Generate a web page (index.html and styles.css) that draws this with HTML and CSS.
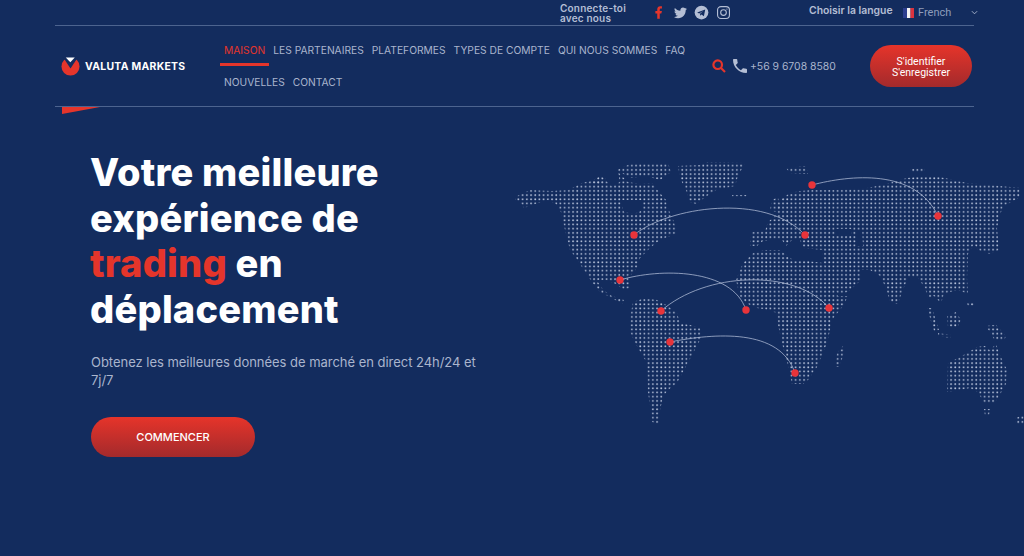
FILE: index.html
```html
<!DOCTYPE html>
<html lang="fr">
<head>
  <meta charset="UTF-8" />
  <meta name="viewport" content="width=device-width, initial-scale=1.0" />
  <title>Valuta Markets</title>
  <link rel="stylesheet" href="styles.css">
</head>
<body>
  <header class="container">
    <div class="topbar">
      <div class="connect">Connecte-toi<br>avec nous</div>
      <div class="social">
        <svg class="social-fb" viewBox="0 0 24 24" width="15" height="15"><path d="M14 13.5h2.5l1-4H14v-2c0-1.03 0-2 2-2h1.5V2.14c-.326-.043-1.557-.14-2.857-.14C11.928 2 10 3.657 10 6.7v2.8H7v4h3V22h4v-8.5z"/></svg>
        <svg viewBox="0 0 24 24" width="15" height="15"><path d="M22.46 6c-.77.35-1.6.58-2.46.69.88-.53 1.56-1.37 1.88-2.38-.83.5-1.75.85-2.72 1.05C18.37 4.5 17.26 4 16 4c-2.35 0-4.27 1.92-4.27 4.29 0 .34.04.67.11.98C8.28 9.09 5.11 7.38 3 4.79c-.37.63-.58 1.37-.58 2.15 0 1.49.75 2.81 1.91 3.56-.71 0-1.37-.2-1.95-.5v.03c0 2.08 1.48 3.82 3.44 4.21a4.22 4.22 0 0 1-1.93.07 4.28 4.28 0 0 0 4 2.98 8.521 8.521 0 0 1-5.33 1.84c-.34 0-.68-.02-1.02-.06C3.44 20.29 5.7 21 8.12 21 16 21 20.33 14.46 20.33 8.79c0-.19 0-.37-.01-.56.84-.6 1.56-1.36 2.14-2.23z"/></svg>
        <svg viewBox="0 0 24 24" width="15" height="15"><circle cx="12" cy="12" r="11"/><path class="cut" d="M5 12l13-5-2.200 11-3.800-2.800-2 1.900-.4-3.100 5.200-4.500-6.500 4z"/></svg>
        <svg class="social-ig" viewBox="0 0 24 24" width="15" height="15"><rect x="2.500" y="2.500" width="19" height="19" rx="5.500"/><circle cx="12" cy="12" r="4.500"/><circle class="dot" cx="17.500" cy="6.500" r="1"/></svg>
      </div>
      <div class="lang-label">Choisir la langue</div>
      <div class="lang">
        <svg viewBox="0 0 11 10" width="11" height="10"><rect width="4" height="10" fill="#2d3f8f"/><rect x="4" width="3.500" height="10" fill="#f4f4f4"/><rect x="7.500" width="3.500" height="10" fill="#d9333f"/></svg>
        <span>French</span>
        <svg class="chevron" viewBox="0 0 8 5" width="7" height="5"><path d="M1 1l3 3 3-3"/></svg>
      </div>
    </div>

    <div class="navbar">
      <div class="logo">
        <svg viewBox="0 0 20 20" width="19" height="19">
          <circle cx="10" cy="10" r="9.500" fill="#e5352b"/>
          <path d="M2 0h16l-8 12z" fill="#132c5e"/>
          <path d="M5 0.500h9.500l-4.700 5z" fill="#fff"/>
        </svg>
        <span>VALUTA MARKETS</span>
      </div>
      <nav class="menu">
        <a class="active">MAISON</a>
        <a>LES PARTENAIRES</a>
        <a>PLATEFORMES</a>
        <a>TYPES DE COMPTE</a>
        <a>QUI NOUS SOMMES</a>
        <a>FAQ</a>
        <a>NOUVELLES</a>
        <a>CONTACT</a>
      </nav>
      <svg class="search" viewBox="0 0 14 14" width="14" height="14"><circle cx="5.700" cy="5.700" r="4.300"/><path d="M9 9l4 4"/></svg>
      <svg class="phone" viewBox="3 3 18 18" width="14" height="14"><path d="M6.620 10.790c1.440 2.830 3.760 5.140 6.590 6.590l2.200-2.200c.27-.27.67-.36 1.020-.24 1.120.37 2.330.57 3.570.57.55 0 1 .45 1 1V20c0 .55-.45 1-1 1-9.390 0-17-7.610-17-17 0-.55.45-1 1-1h3.500c.55 0 1 .45 1 1 0 1.250.2 2.450.57 3.570.11.35.03.74-.25 1.020l-2.200 2.200z"/></svg>
      <span class="phone-num">+56 9 6708 8580</span>
      <a class="btn btn-login">S'identifier<br>S'enregistrer</a>
      <span class="wedge"></span>
    </div>
  </header>

  <main class="hero">
    <div class="hero-text">
      <h1>Votre meilleure expérience de <span class="red">trading</span> en déplacement</h1>
      <p>Obtenez les meilleures données de marché en direct 24h/24 et 7j/7</p>
      <a class="btn btn-start">COMMENCER</a>
    </div>

    <svg class="map" viewBox="510 150 514 280" width="514" height="280">
      <defs>
        <pattern id="dots" x="0" y="0" width="4.200" height="4.200" patternUnits="userSpaceOnUse">
          <rect x="1" y="1" width="1.700" height="1.700" rx="0.600" fill="#b4bfd8"/>
        </pattern>
      </defs>
      <g fill="url(#dots)" fill-rule="evenodd">
        <!-- north america -->
        <path d="M515 197L530 190 552 191 568 190 582 183 590 181 604 179 612 186 620 182 618 172 628 182 640 184 652 183 660 193 666 200 668 208 674 222 677 233 670 236 660 240 650 248 640 258 637 268 632 274 628 276 630 288 624 290 616 284 606 280 597 280 600 286 606 292 612 296 624 300 622 304 612 298 600 292 592 282 584 270 576 258 570 250 567 238 563 222 561 212 556 204 548 200 535 204 524 208 520 202 515 202ZM620 200L643 200 643 210 634 214 624 212Z"/>
        <path d="M617 170L630 164 668 163 671 172 660 180 646 176 630 178ZM590 182L600 176 606 179 600 184Z"/>
        <!-- greenland, iceland -->
        <path d="M678 166L700 165 708 162 745 163 738 176 735 186 716 190 704 198 696 204 690 202 686 190 680 178ZM732 195H748V198H732Z"/>
        <!-- south america -->
        <path d="M633 302L645 298 657 300 668 306 677 313 680 323 690 325 700 328 701 338 692 355 684 370 677 383 668 390 663 397 660 410 660 424 652 422 650 405 648 393 647 363 638 348 630 332 630 318Z"/>
        <!-- africa -->
        <path d="M753 253L765 250 780 250 793 260 808 261 823 263 826 272 832 284 838 296 848 296 843 306 832 320 830 330 827 343 822 355 817 367 808 380 803 384 792 384 788 365 783 347 778 325 777 313 768 310 757 308 748 304 740 297 736 280 743 263Z"/>
        <path d="M835 367L837 353 843 346 845 350 841 362 839 367Z"/>
        <!-- eurasia -->
        <path d="M750 241L752 232 765 231 768 222 775 216 780 200 790 193 800 191 812 190 834 190 850 189 867 188 886 184 907 178 925 176 940 177 967 183 990 185 1020 188 1020 197 1004 206 1000 214 997 228 999 250 990 254 978 250 974 244 968 254 967 278 968 294 958 290 950 292 944 294 941 303 934 296 928 298 925 288 918 278 908 278 902 292 898 304 890 302 886 288 880 276 870 270 860 270 861 280 848 292 838 294 832 286 826 272 823 262 822 250 803 248 800 240 792 240 786 246 782 240 770 240 763 241 757 246 750 246ZM835 229L851 229 851 236 835 236ZM856 230L862 230 863 246 857 246Z"/>
        <path d="M772 200L778 197 780 208 776 212 770 210ZM786 168L806 166 808 174 790 173ZM910 169L925 168 925 172 912 172Z"/>
        <!-- islands -->
        <path d="M927 308L932 308 939 330 934 331ZM947 316L956 312 961 320 957 328 948 327ZM938 333L951 335 950 338 938 336ZM967 303L975 303 974 306 968 306ZM986 326L996 325 1006 336 1004 341 994 339Z"/>
        <!-- australia -->
        <path d="M948 363L958 358 967 353 977 347 985 346 990 350 996 344 1000 355 1007 370 1006 384 998 398 994 403 984 403 978 392 970 388 960 390 947 392Z"/>
        <path d="M984 409L990 409 989 416 985 416ZM1015 418L1024 415 1024 424 1016 424Z"/>
      </g>
      <g class="arcs">
        <path d="M634 235C668 207 765 192 805 235"/>
        <path d="M812 185C850 175 915 168 938 216"/>
        <path d="M620 280C660 268 732 268 746 310"/>
        <path d="M661 311C705 272 795 268 829 308"/>
        <path d="M670 342C715 333 780 328 795 373"/>
      </g>
      <g fill="#e8343a">
        <circle cx="634" cy="235" r="3.700"/>
        <circle cx="620" cy="280" r="3.700"/>
        <circle cx="661" cy="311" r="3.700"/>
        <circle cx="746" cy="310" r="3.700"/>
        <circle cx="829" cy="308" r="3.700"/>
        <circle cx="670" cy="342" r="3.700"/>
        <circle cx="795" cy="373" r="3.700"/>
        <circle cx="805" cy="235" r="3.700"/>
        <circle cx="812" cy="185" r="3.700"/>
        <circle cx="938" cy="216" r="3.700"/>
      </g>
    </svg>
  </main>
</body>
</html>
```

FILE: styles.css
```css
* {
  margin: 0;
  padding: 0;
  box-sizing: border-box;
}

body {
  font-family: 'Inter', 'Liberation Sans', sans-serif;
  background: #132c5e;
  color: #fff;
  height: 556px;
  overflow: hidden;
}

.container {
  margin-left: 55px;
  width: 919px;
}

/* top strip */
.topbar {
  display: flex;
  align-items: center;
  height: 26px;
  padding-left: 505px;
  border-bottom: 1px solid #4d648f;
  color: #b4bed4;
}

.topbar > * {
  flex: none;
}

.connect {
  width: 91px;
  font-size: 10px;
  font-weight: 600;
  line-height: 10px;
  letter-spacing: 0.2px;
}

.social {
  display: flex;
  gap: 6.600px;
  width: 158px;
}

.social svg {
  fill: #b4bed4;
}

.social .social-fb {
  fill: #e5352b;
}

.social .cut {
  fill: #132c5e;
}

.social .social-ig {
  fill: none;
  stroke: #b4bed4;
  stroke-width: 1.800;
}

.social .social-ig .dot {
  fill: #b4bed4;
  stroke: none;
}

.lang-label {
  width: 94px;
  font-size: 10.400px;
  font-weight: 600;
  margin-top: -4px;
}

.lang {
  display: flex;
  align-items: center;
  font-family: 'Roboto', sans-serif;
  font-size: 11px;
  color: #8e9cbb;
}

.lang span {
  margin-left: 4px;
  width: 53px;
}

.chevron {
  fill: none;
  stroke: #b4bed4;
  stroke-width: 1;
}

/* main nav */
.navbar {
  position: relative;
  display: flex;
  align-items: center;
  height: 81px;
  border-bottom: 1px solid #4d648f;
}

.logo {
  display: flex;
  align-items: center;
  gap: 5px;
  width: 165px;
  padding-left: 6px;
  font-size: 10.400px;
  font-weight: 700;
  letter-spacing: 0.3px;
}

.menu {
  display: flex;
  flex-wrap: wrap;
  width: 487px;
  font-size: 10.250px;
  color: #aab5cd;
}

.menu a {
  height: 32px;
  line-height: 33px;
  padding: 0 4px;
}

.menu .active {
  color: #e5352b;
  border-bottom: 3px solid #e5352b;
}

.search {
  fill: none;
  stroke: #e5352b;
  stroke-width: 2.200;
  margin-left: 5px;
}

.phone {
  fill: #b4bed4;
  margin-left: 7px;
}

.phone-num {
  margin-left: 3px;
  width: 120px;
  font-size: 10.400px;
  color: #aab5cd;
}

.btn {
  display: flex;
  align-items: center;
  justify-content: center;
  text-align: center;
  border-radius: 21px;
  background: linear-gradient(180deg, #e6342a 0%, #a32a2c 100%);
  color: #fff;
}

.btn-login {
  width: 102px;
  height: 42px;
  padding-top: 1px;
  font-family: 'Roboto', sans-serif;
  font-size: 10.500px;
  line-height: 11px;
}

.wedge {
  position: absolute;
  left: 7px;
  top: 81px;
  width: 38px;
  height: 7px;
  background: #e5352b;
  clip-path: polygon(0 0, 100% 0, 0 100%);
}

/* hero */
.hero {
  display: flex;
  padding: 43px 0 0 91px;
}

.hero-text {
  width: 419px;
  flex: none;
}

h1 {
  width: 300px;
  margin-left: -1px;
  font-size: 38px;
  font-weight: 800;
  line-height: 45.500px;
  letter-spacing: 0.2px;
}

.red {
  color: #e5352b;
}

.hero-text p {
  width: 392px;
  margin-top: 21px;
  font-size: 13px;
  line-height: 18px;
  letter-spacing: -0.030px;
  color: #aab5cd;
}

.btn-start {
  width: 164px;
  height: 40px;
  margin-top: 28px;
  border-radius: 20px;
  font-size: 11px;
  font-weight: 500;
}

.map {
  flex: none;
}

.arcs {
  fill: none;
  stroke: #aab6d2;
  stroke-width: 0.800;
}
```
